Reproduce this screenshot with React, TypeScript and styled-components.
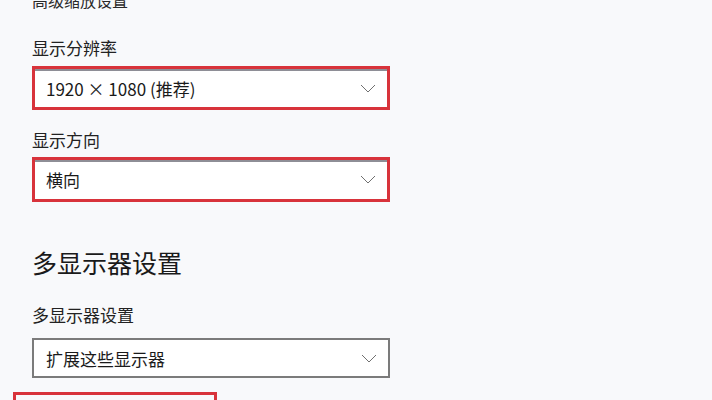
import React from 'react'
import styled, { createGlobalStyle } from 'styled-components'

const GlobalStyle = createGlobalStyle`
  html, body {
    margin: 0;
    padding: 0;
    background: #f8f9fb;
    overflow: hidden;
  }
  body {
    font-family: "Noto Sans CJK SC", "Noto Sans", sans-serif;
    color: #1b1b1b;
  }
`

const Page = styled.main`
  width: 712px;
  height: 400px;
  padding-left: 32px;
  box-sizing: border-box;
  display: flex;
  flex-direction: column;
  overflow: hidden;

  & > * {
    flex-shrink: 0;
  }
`

const SubTitle = styled.div`
  font-size: 16px;
  line-height: 20px;
  margin-top: -10px;
  color: #2a2a2a;
`

const Label = styled.div<{ $top: number }>`
  font-size: 17px;
  line-height: 24px;
  margin-top: ${p => p.$top}px;
  color: #222;
`

const Heading = styled.h2<{ $top: number }>`
  margin: ${p => p.$top}px 0 0;
  font-size: 25px;
  line-height: 32px;
  font-weight: 400;
  color: #1a1a1a;
`

const Select = styled.div<{ $top: number; $marked?: boolean; $height: number }>`
  margin-top: ${p => p.$top}px;
  width: 358px;
  height: ${p => p.$height}px;
  box-sizing: border-box;
  display: flex;
  align-items: center;
  justify-content: space-between;
  background: #fff;
  border: ${p => (p.$marked ? '3px solid #d8333b' : '2px solid #7b7b7b')};
  box-shadow: ${p => (p.$marked ? 'inset 0 2px 0 #8e8e96' : 'none')};
  padding: 0 11px 0 ${p => (p.$marked ? 11 : 12)}px;
  font-size: 17px;
  color: #1a1a1a;
`

const Chevron = styled.svg`
  width: 16px;
  height: 9px;
  flex: none;
`

const Marker = styled.div`
  margin: 14px 0 0 -19px;
  width: 204px;
  height: 30px;
  box-sizing: border-box;
  border: 3px solid #d8333b;
  border-bottom: none;
`

const Arrow = () => (
  <Chevron viewBox="0 0 16 9">
    <path d="M1 1 L8 8 L15 1" fill="none" stroke="#707070" strokeWidth="1" />
  </Chevron>
)

export default function App() {
  return (
    <>
      <GlobalStyle />
      <Page>
        <SubTitle>高级缩放设置</SubTitle>
        <Label $top={26}>显示分辨率</Label>
        <Select $top={6} $height={44} $marked>
          <span>1920 × 1080 (推荐)</span>
          <Arrow />
        </Select>
        <Label $top={18}>显示方向</Label>
        <Select $top={5} $height={45} $marked>
          <span>横向</span>
          <Arrow />
        </Select>
        <Heading $top={44}>多显示器设置</Heading>
        <Label $top={25}>多显示器设置</Label>
        <Select $top={11} $height={40}>
          <span>扩展这些显示器</span>
          <Arrow />
        </Select>
        <Marker />
      </Page>
    </>
  )
}
